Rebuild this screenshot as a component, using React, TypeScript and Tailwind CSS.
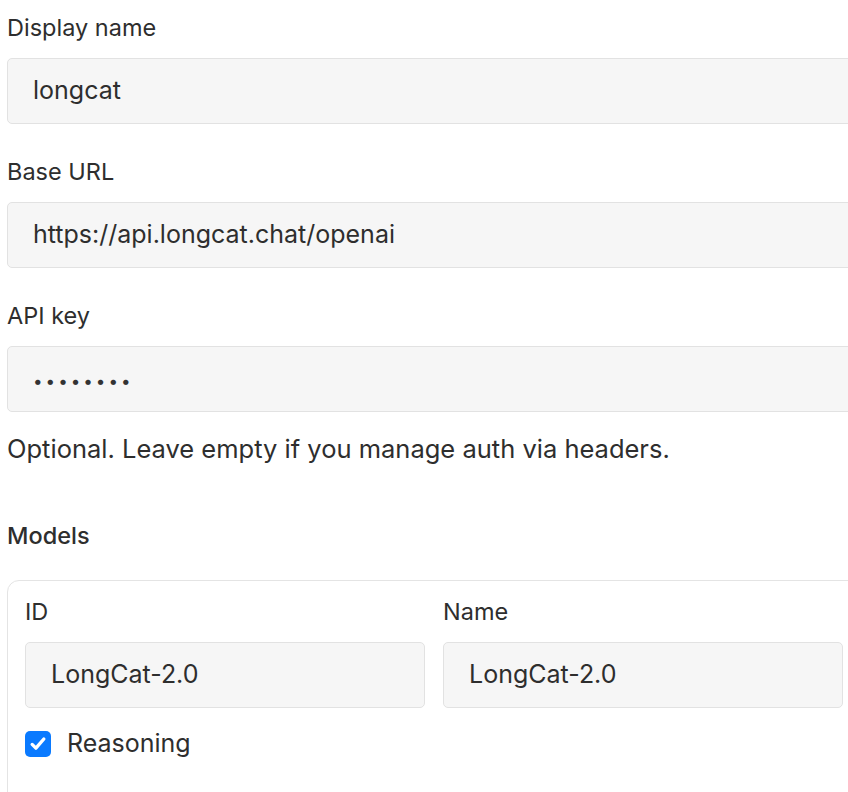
const font = { fontFamily: "Inter, 'Noto Sans', sans-serif" };

function Field({ label, value, dots }: { label: string; value?: string; dots?: boolean }) {
  return (
    <div className="flex flex-col">
      <label className="text-[23.5px] leading-[28px] text-[#2e2e2e]">{label}</label>
      <div className="mt-[16px] h-[66px] flex items-center rounded-[5px] border-[1.5px] border-[#e2e2e2] bg-[#f6f6f6] px-[25px]">
        {dots ? (
          <span className="text-[17px] tracking-[3px] text-[#333] pt-[5px]">••••••••</span>
        ) : (
          <span className="text-[25px] text-[#2e2e2e]">{value}</span>
        )}
      </div>
    </div>
  );
}

export default function App() {
  return (
    <div className="w-[848px] h-[792px] overflow-hidden bg-white" style={font}>
      <div className="w-[860px] pl-[7px] pt-[14px] flex flex-col">
        <div className="flex flex-col gap-[34px]">
          <Field label="Display name" value="longcat" />
          <Field label="Base URL" value="https://api.longcat.chat/openai" />
          <Field label="API key" dots />
        </div>
        <p className="mt-[21px] text-[25.5px] leading-[32px] text-[#2e2e2e]">
          Optional. Leave empty if you manage auth via headers.
        </p>
        <h3 className="mt-[57px] text-[23.5px] leading-[28px] font-[460] text-[#2e2e2e]">Models</h3>
        <div className="mt-[30px] w-[854px] rounded-[12px] border-[1.5px] border-[#e4e4e4] px-[17px] pt-[17px] pb-[40px]">
          <div className="grid grid-cols-2 gap-x-[18px]">
            <Field label="ID" value="LongCat-2.0" />
            <Field label="Name" value="LongCat-2.0" />
          </div>
          <div className="mt-[17px] flex items-center gap-[16px]">
            <div className="w-[26px] h-[26px] rounded-[5px] bg-[#0a7aff] flex items-center justify-center">
              <svg viewBox="0 0 24 24" className="w-[20px] h-[20px]" fill="none" stroke="white" strokeWidth={4} strokeLinecap="round" strokeLinejoin="round">
                <path d="M5 12.5l4.5 4.5L19 6" />
              </svg>
            </div>
            <span className="text-[25px] text-[#2e2e2e]">Reasoning</span>
          </div>
        </div>
      </div>
    </div>
  );
}
